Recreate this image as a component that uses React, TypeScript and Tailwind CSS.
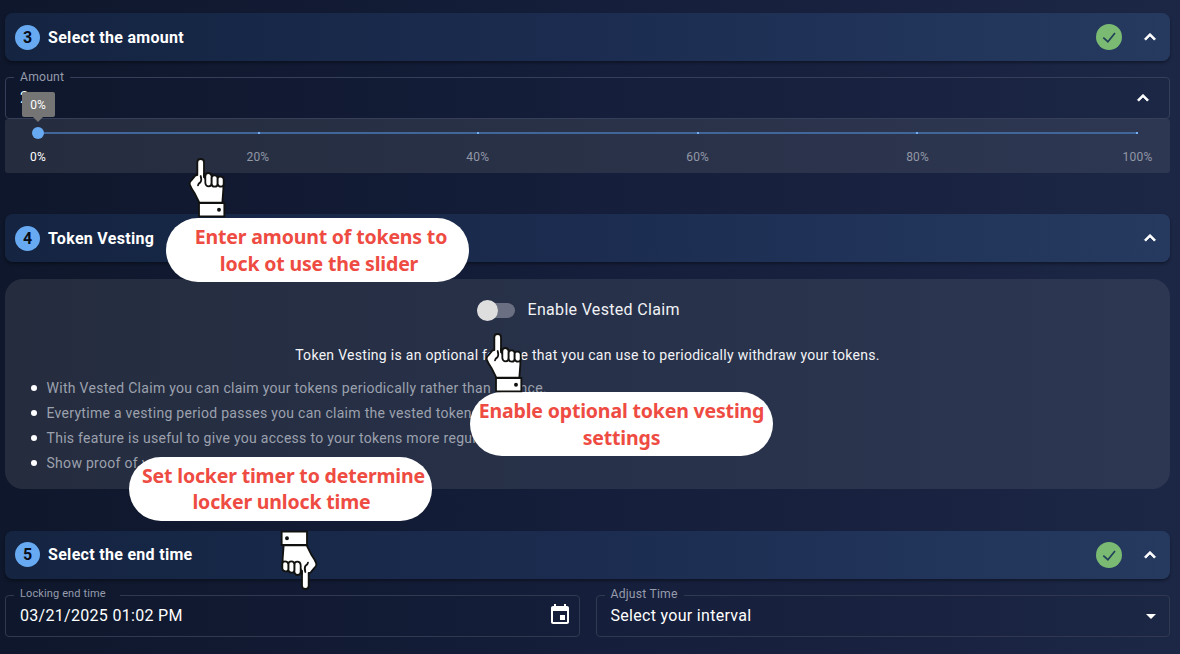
import type { ReactNode } from "react";

const MARKS = ["0%", "20%", "40%", "60%", "80%", "100%"];

function ChevronUp({ className }: { className: string }) {
  return (
    <svg viewBox="0 0 24 24" className={className} fill="currentColor">
      <path d="M12 8l-6 6 1.41 1.41L12 10.83l4.59 4.58L18 14z" stroke="currentColor" strokeWidth="0.9" />
    </svg>
  );
}

function StepHeader({ step, title, done }: { step: number; title: string; done?: boolean }) {
  return (
    <header className="flex h-12 items-center rounded-lg bg-linear-to-r from-[#142441] via-[#1b2c50] to-[#263a60] pr-[9px] pl-[10px] text-white shadow-[0_2px_3px_rgba(0,0,0,0.35)]">
      <span className="flex size-[25px] items-center justify-center rounded-full bg-[#68aaf2] pt-px text-base font-bold text-[#080d18]">
        {step}
      </span>
      <h2 className="ml-[8px] pt-px text-base font-bold tracking-[0.3px]">{title}</h2>
      {done && (
        <svg viewBox="0 0 26 26" className="ml-auto size-[26px]" fill="none">
          <circle cx="13" cy="13" r="13" fill="#7aba72" />
          <path d="M7.3 13.6l4.6 4.1L19 9" stroke="#23405a" strokeWidth="1.7" />
        </svg>
      )}
      <ChevronUp className={done ? "ml-[17px] size-[22px]" : "ml-auto size-[22px]"} />
    </header>
  );
}

function Hand({ className }: { className: string }) {
  return (
    <svg viewBox="0 0 180 198" className={className} fill="#fff" stroke="#11110f" strokeWidth="5.4" strokeLinejoin="round" strokeLinecap="round">
      <path d="M52 63V25q0-10 10-10t10 10v39l8 20h50v22l-3 40H58L43 116Q33 102 29 91q-1-7 5-12l10-12q3-4 8-4z" />
      <path d="M72 60v10M62 66q4 13-1 19-6 3-7 9" fill="none" />
      <path d="M76 67q0-10 9-10t10 10v20q0 10-9 10t-10-10z" />
      <path d="M95 71q1-8 9-7t9 8v17q0 9-9 9t-9-9z" />
      <path d="M113 74q1-7 9-6t9 8v14q0 8-8 8t-10-8z" />
      <path d="M57 147h76v40H57z" strokeLinejoin="miter" />
      <circle cx="117" cy="167" r="3.2" fill="#11110f" />
    </svg>
  );
}

function Callout({ className, children }: { className: string; children: ReactNode }) {
  return (
    <div
      className={`absolute flex h-16 w-[303px] flex-col items-center rounded-[32px] bg-white text-center font-['Noto_Sans',sans-serif] text-[19.5px] leading-[26.5px] font-bold tracking-[-0.17px] whitespace-nowrap text-[#ee4b42] ${className}`}
    >
      {children}
    </div>
  );
}

export default function App() {
  return (
    <div className="relative h-[654px] w-[1180px] overflow-hidden bg-linear-to-r from-[#0e172b] via-[#151e3a] to-[#1c2746] pt-[13px] pr-[10px] pl-[5px] font-[Roboto,sans-serif] text-white">
      <section>
        <StepHeader step={3} title="Select the amount" done />
        <fieldset className="mt-[8px] h-[50px] rounded-[4px] border border-[#353f59] pr-[15px] pl-[8px]">
          <legend className="h-[17px] px-[6px] text-[12.2px] leading-[17px] tracking-[0.2px] text-[#969cac]">Amount</legend>
          <div className="flex h-6 items-center justify-between pl-[6px] text-base">
            <span>2</span>
            <ChevronUp className="size-[22px]" />
          </div>
        </fieldset>
        <div className="h-[54px] rounded-[3px] bg-linear-to-r from-[#252c3e] to-[#2e3752] pr-[32.5px] pl-[33px]">
          <div className="relative h-[29px]">
            <div className="absolute top-[13px] h-[2px] w-full bg-[#41669a]" />
            <div className="absolute top-[13px] flex w-full justify-between">
              {MARKS.map((m) => (
                <i key={m} className="size-[2px] bg-[#73aff2]" />
              ))}
            </div>
            <div className="absolute top-[8px] -left-[6px] size-3 rounded-full bg-[#68aaf2]" />
            <div className="absolute -top-[27px] -left-[16.5px] flex h-[25px] w-[33px] items-center justify-center rounded-[2px] bg-[#757575] text-xs">
              0%
              <svg viewBox="0 0 10 5" className="absolute top-[25px] left-[11.5px] h-[5px] w-[10px]" fill="#757575">
                <path d="M0 0h10L5 5z" />
              </svg>
            </div>
          </div>
          <div className="flex justify-between text-xs leading-[19px] tracking-[0.2px] text-[#9298a7]">
            {MARKS.map((m) => (
              <span key={m} className="flex w-0 justify-center first:text-white">
                {m}
              </span>
            ))}
          </div>
        </div>
      </section>

      <section className="mt-[41px]">
        <StepHeader step={4} title="Token Vesting" />
        <div className="mt-[17px] h-[210px] rounded-[18px] bg-linear-to-r from-[#252c3e] via-[#273149] to-[#2e3752] pt-[19px]">
          <div className="flex items-center pl-[472px]">
            <span className="flex h-[15px] w-[38px] items-center rounded-full bg-[#6a7081]">
              <span className="size-[21px] shrink-0 rounded-full bg-[#dfdedf]" />
            </span>
            <span className="ml-[12.5px] text-base leading-[24px] tracking-[0.32px] text-[#f1f2f5]">Enable Vested Claim</span>
          </div>
          <p className="mt-[23px] text-center text-sm leading-5 tracking-[0.29px] text-[#f3f4f7]">
            Token Vesting is an optional feature that you can use to periodically withdraw your tokens.
          </p>
          <ul className="mt-[11px] list-none pl-[26px] text-sm leading-[25px] tracking-[0.29px] text-[#9ca1ae]">
            {[
              "With Vested Claim you can claim your tokens periodically rather than at once.",
              "Everytime a vesting period passes you can claim the vested tokens.",
              "This feature is useful to give you access to your tokens more regularly.",
              "Show proof of vesting",
            ].map((t) => (
              <li key={t} className="flex items-center gap-[9.5px]">
                <i className="size-[6px] -translate-y-px rounded-full bg-white" />
                {t}
              </li>
            ))}
          </ul>
        </div>
      </section>

      <section className="mt-[41.5px]">
        <StepHeader step={5} title="Select the end time" done />
        <div className="mt-[8.5px] flex gap-[16px]">
          <fieldset className="h-[50px] w-[574.5px] rounded-[4px] border border-[#30394f] pr-[7px] pl-[8px]">
            <legend className="h-[17px] w-[106px] px-[6px] text-[11px] leading-[13px] tracking-[0.12px] text-[#969cac]">
              Locking end time
            </legend>
            <div className="flex h-6 items-center justify-between pl-[6px] text-base">
              <span className="tracking-[0.3px]">03/21/2025 01:02 PM</span>
              <svg viewBox="0 0 24 24" className="size-[24px] -translate-y-px" fill="currentColor">
                <path d="M17 12h-5v5h5v-5zM16 1v2H8V1H6v2H5c-1.11 0-1.99.9-1.99 2L3 19c0 1.1.89 2 2 2h14c1.1 0 2-.9 2-2V5c0-1.1-.9-2-2-2h-1V1h-2zm3 18H5V8h14v11z" />
              </svg>
            </div>
          </fieldset>
          <fieldset className="h-[50px] flex-1 rounded-[4px] border border-[#30394f] pr-[6px] pl-[8px]">
            <legend className="h-[17px] px-[6px] text-[12.2px] leading-[15px] tracking-[0.2px] text-[#969cac]">Adjust Time</legend>
            <div className="flex h-6 items-center justify-between pl-[6px] text-base">
              <span className="tracking-[0.3px]">Select your interval</span>
              <svg viewBox="0 0 24 24" className="size-6" fill="currentColor">
                <path d="M7 10l5 5 5-5z" />
              </svg>
            </div>
          </fieldset>
        </div>
      </section>

      <Callout className="top-[218px] left-[166px] pt-[6px] pl-[7px]">
        <span>Enter amount of tokens to</span>
        <span className="-ml-[4px]">lock ot use the slider</span>
      </Callout>
      <Callout className="top-[392px] left-[470px] pt-[6px]">
        <span>Enable optional token vesting</span>
        <span>settings</span>
      </Callout>
      <Callout className="top-[456.5px] left-[129px] pt-[6px]">
        <span className="ml-[6px]">Set locker timer to determine</span>
        <span className="ml-[2px]">locker unlock time</span>
      </Callout>
      <Hand className="absolute top-[154px] left-[180px] h-[66px] w-[60px]" />
      <Hand className="absolute top-[328.5px] left-[477px] h-[66px] w-[60px]" />
      <Hand className="absolute top-[528px] left-[266px] h-[66px] w-[60px] rotate-180" />
    </div>
  );
}
